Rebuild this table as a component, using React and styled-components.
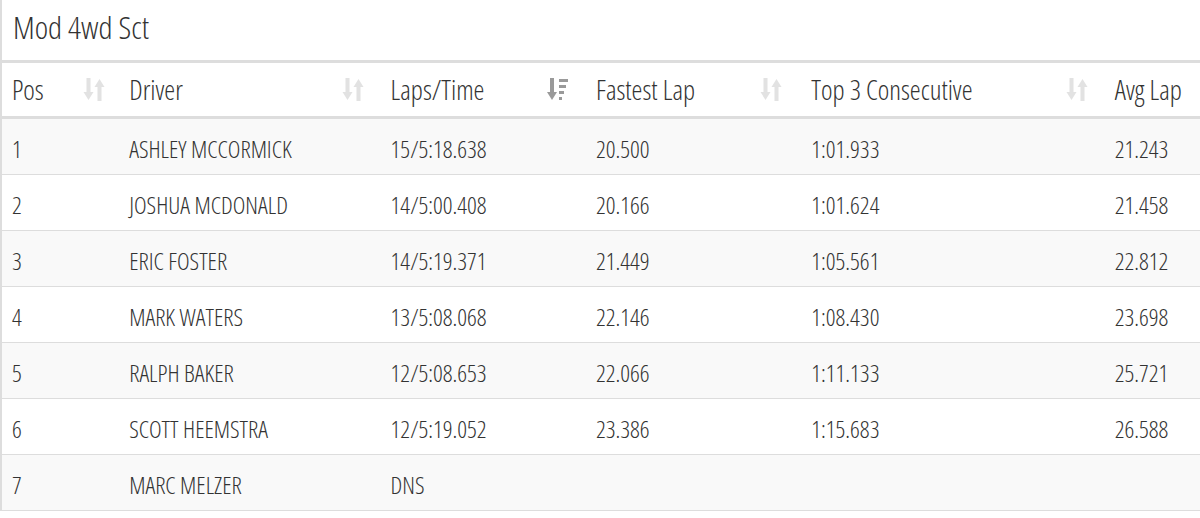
import React from "react";
import styled, { createGlobalStyle } from "styled-components";

const Global = createGlobalStyle`
  html, body { margin: 0; padding: 0; background: #fff; overflow: hidden; }
  body { font-family: "Open Sans", "Liberation Sans", sans-serif; font-stretch: 75%; font-weight: 300; color: #333; }
`;

const Panel = styled.div`
  width: 1240px;
  border-left: 2px solid #ddd;
`;

const Title = styled.div`
  display: flex;
  align-items: center;
  padding-left: 11px;
  font-size: 32px;
  color: #333;
  border-bottom: 3px solid #ddd;
  box-sizing: border-box;
  height: 63px;
  padding-bottom: 8px;
`;

const Table = styled.table`
  border-collapse: collapse;
  table-layout: fixed;
  width: 100%;
`;

const Th = styled.th`
  width: ${(p) => p.$w}px;
  height: 54px;
  padding: 0 0 0 10px;
  text-align: left;
  font-weight: 300;
  font-size: 27.5px;
  color: #333;
  border-bottom: 3px solid #ddd;
  box-sizing: border-box;
`;

const HeadInner = styled.div`
  display: flex;
  align-items: center;
  justify-content: space-between;
  padding-right: ${(p) => p.$pr ?? 17}px;
  padding-top: 1px;
`;

const Tr = styled.tr`
  background: ${(p) => (p.$odd ? "#f9f9f9" : "#fff")};
`;

const Td = styled.td`
  height: 51px;
  padding: 4px 0 0 10px;
  font-size: 24px;
  color: #333;
  border-bottom: 1px solid #ddd;
  white-space: nowrap;
`;

const SortIcon = ({ active }) =>
  active ? (
    <svg width="22" height="23" viewBox="0 0 22 23">
      <g fill="#9a9a9a">
        <rect x="3" y="0" width="4" height="15" />
        <polygon points="0,14 10,14 5,22" />
        <rect x="12" y="1" width="9" height="3" />
        <rect x="12" y="7" width="7" height="3" />
        <rect x="12" y="13" width="5" height="3" />
        <rect x="12" y="19" width="3" height="3" />
      </g>
    </svg>
  ) : (
    <svg width="22" height="23" viewBox="0 0 22 23">
      <g fill="#e2e2e2">
        <rect x="3.5" y="0" width="4" height="15" />
        <polygon points="0.5,14 10.5,14 5.5,22" />
        <rect x="14.5" y="7" width="4" height="16" />
        <polygon points="11.5,9 21.5,9 16.5,1" />
      </g>
    </svg>
  );

const cols = [
  { label: "Pos", w: 117, pr: 14 },
  { label: "Driver", w: 261 },
  { label: "Laps/Time", w: 205, active: true },
  { label: "Fastest Lap", w: 215, pr: 19 },
  { label: "Top 3 Consecutive", w: 303 },
  { label: "Avg Lap", w: 137 },
];

const rows = [
  ["1", "ASHLEY MCCORMICK", "15/5:18.638", "20.500", "1:01.933", "21.243"],
  ["2", "JOSHUA MCDONALD", "14/5:00.408", "20.166", "1:01.624", "21.458"],
  ["3", "ERIC FOSTER", "14/5:19.371", "21.449", "1:05.561", "22.812"],
  ["4", "MARK WATERS", "13/5:08.068", "22.146", "1:08.430", "23.698"],
  ["5", "RALPH BAKER", "12/5:08.653", "22.066", "1:11.133", "25.721"],
  ["6", "SCOTT HEEMSTRA", "12/5:19.052", "23.386", "1:15.683", "26.588"],
  ["7", "MARC MELZER", "DNS", "", "", ""],
];

export default function App() {
  return (
    <>
      <Global />
      <Panel>
        <Title>Mod 4wd Sct</Title>
        <Table>
          <thead>
            <tr>
              {cols.map((c) => (
                <Th key={c.label} $w={c.w}>
                  <HeadInner $pr={c.pr}>
                    <span>{c.label}</span>
                    <SortIcon active={c.active} />
                  </HeadInner>
                </Th>
              ))}
            </tr>
          </thead>
          <tbody>
            {rows.map((r, i) => (
              <Tr key={i} $odd={i % 2 === 0}>
                {r.map((v, j) => (
                  <Td key={j}>{v}</Td>
                ))}
              </Tr>
            ))}
          </tbody>
        </Table>
      </Panel>
    </>
  );
}
